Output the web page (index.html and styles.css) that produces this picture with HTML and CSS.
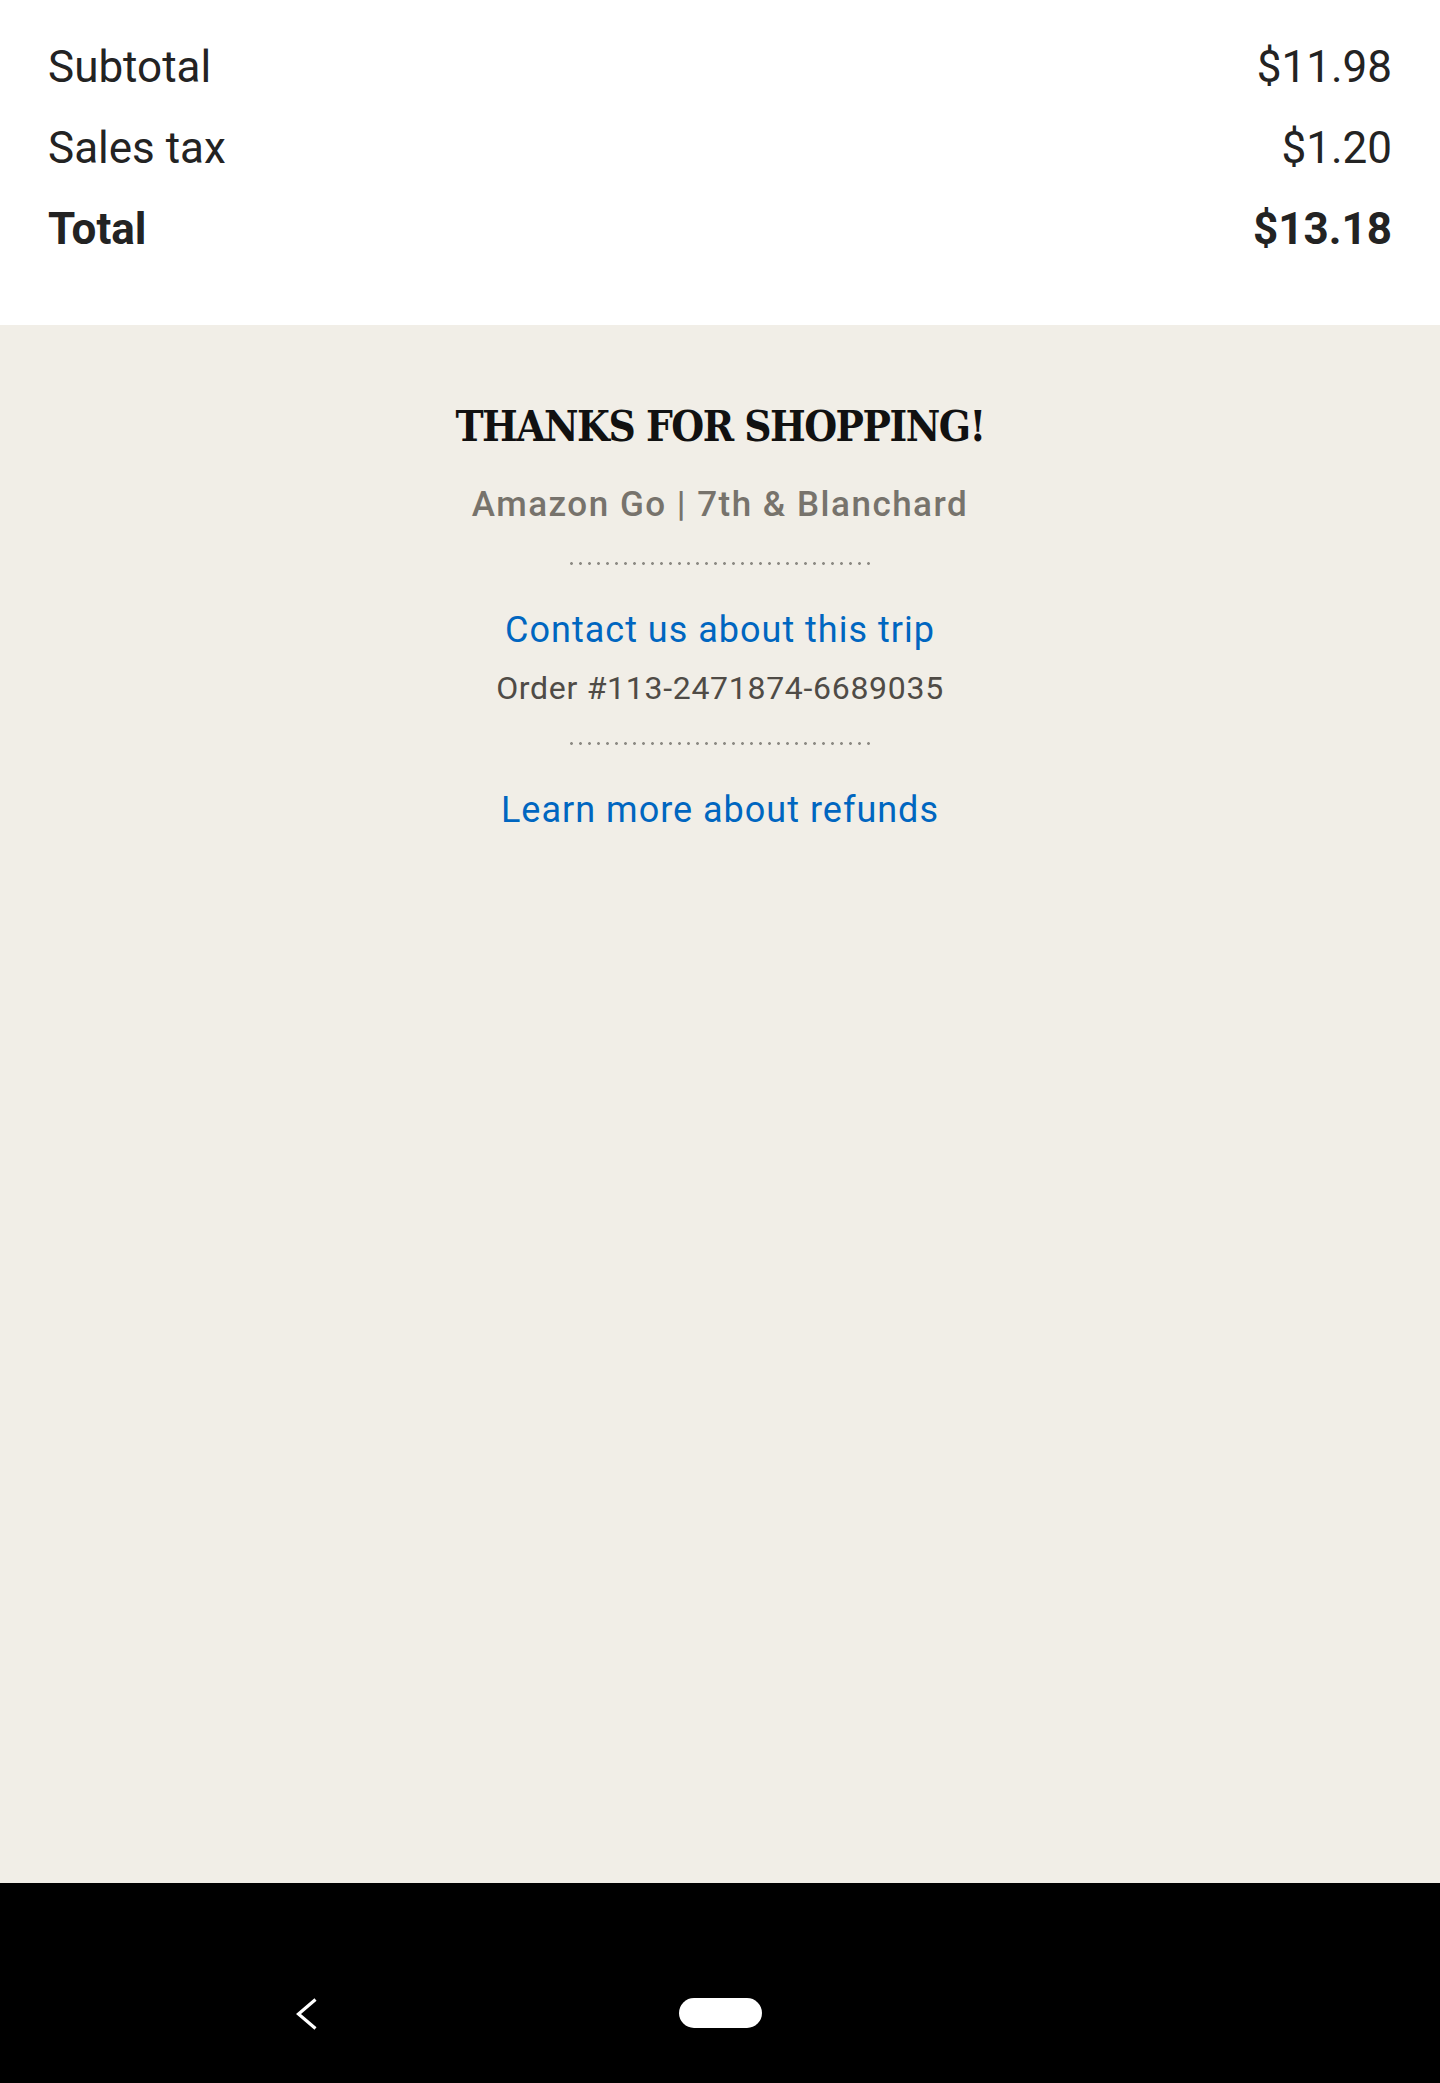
FILE: index.html
```html
<!DOCTYPE html>
<html lang="en">
<head>
<meta charset="utf-8">
<title>Receipt</title>
<link rel="stylesheet" href="styles.css">
</head>
<body>
<div class="page">
  <section class="summary">
    <div class="row"><span>Subtotal</span><span>$11.98</span></div>
    <div class="row"><span>Sales tax</span><span>$1.20</span></div>
    <div class="row total"><span>Total</span><span>$13.18</span></div>
  </section>
  <main class="footer">
    <h1 class="thanks">THANKS FOR SHOPPING!</h1>
    <p class="store">Amazon Go | 7th &amp; Blanchard</p>
    <div class="dots dots-first"></div>
    <a class="link contact" href="#">Contact us about this trip</a>
    <p class="order">Order #113-2471874-6689035</p>
    <div class="dots dots-second"></div>
    <a class="link refunds" href="#">Learn more about refunds</a>
  </main>
  <nav class="navbar">
    <svg class="back" width="22" height="32" viewBox="0 0 22 32" aria-hidden="true">
      <polyline points="19.5,1.5 2.5,16 19.5,30.5" fill="none" stroke="#fff" stroke-width="3.2" stroke-linejoin="miter"/>
    </svg>
    <div class="home"></div>
  </nav>
</div>
</body>
</html>
```

FILE: styles.css
```css
* {
  box-sizing: border-box;
}

html, body {
  margin: 0;
  padding: 0;
}

body {
  background: #f1eee7;
  font-family: Roboto, "Liberation Sans", sans-serif;
}

.page {
  min-height: 100vh;
  display: flex;
  flex-direction: column;
}

.summary {
  background: #ffffff;
  padding: 27px 48px 55px;
  color: #232323;
  height: 325px;
}

.row {
  display: flex;
  justify-content: space-between;
  font-size: 44px;
  line-height: 81px;
  height: 81px;
}

.row.total {
  font-weight: 700;
}

.footer {
  flex: 1;
  display: flex;
  flex-direction: column;
  align-items: center;
  padding-top: 77px;
  text-align: center;
}

.thanks {
  margin: 0;
  font-family: "DejaVu Serif Condensed", "DejaVu Serif", serif;
  font-stretch: condensed;
  font-weight: 700;
  font-size: 42px;
  line-height: 50px;
  letter-spacing: -1.5px;
  color: #111111;
}

.store {
  margin: 31px 0 0;
  font-size: 35px;
  font-weight: 500;
  line-height: 44px;
  letter-spacing: 1.5px;
  color: #77736c;
}

.dots {
  width: 300px;
  height: 3px;
  background-image: radial-gradient(circle at 1.5px 1.5px, #8d8a84 1.2px, transparent 1.6px);
  background-size: 9px 3px;
  background-repeat: repeat-x;
}

.dots-first {
  margin-top: 35px;
}

.dots-second {
  margin-top: 34px;
}

.link {
  display: block;
  font-size: 36px;
  line-height: 44px;
  letter-spacing: 1px;
  color: #0066c0;
  text-decoration: none;
}

.contact {
  margin-top: 43px;
}

.refunds {
  margin-top: 43px;
}

.order {
  margin: 16px 0 0;
  font-size: 32px;
  line-height: 40px;
  letter-spacing: 0.7px;
  color: #4f4b46;
}

.navbar {
  height: 200px;
  background: #000000;
  display: flex;
  align-items: flex-start;
  padding: 115px 0 0 296px;
}

.back {
  display: block;
}

.home {
  margin-left: 361px;
  width: 83px;
  height: 30px;
  border-radius: 15px;
  background: #ffffff;
}
```
